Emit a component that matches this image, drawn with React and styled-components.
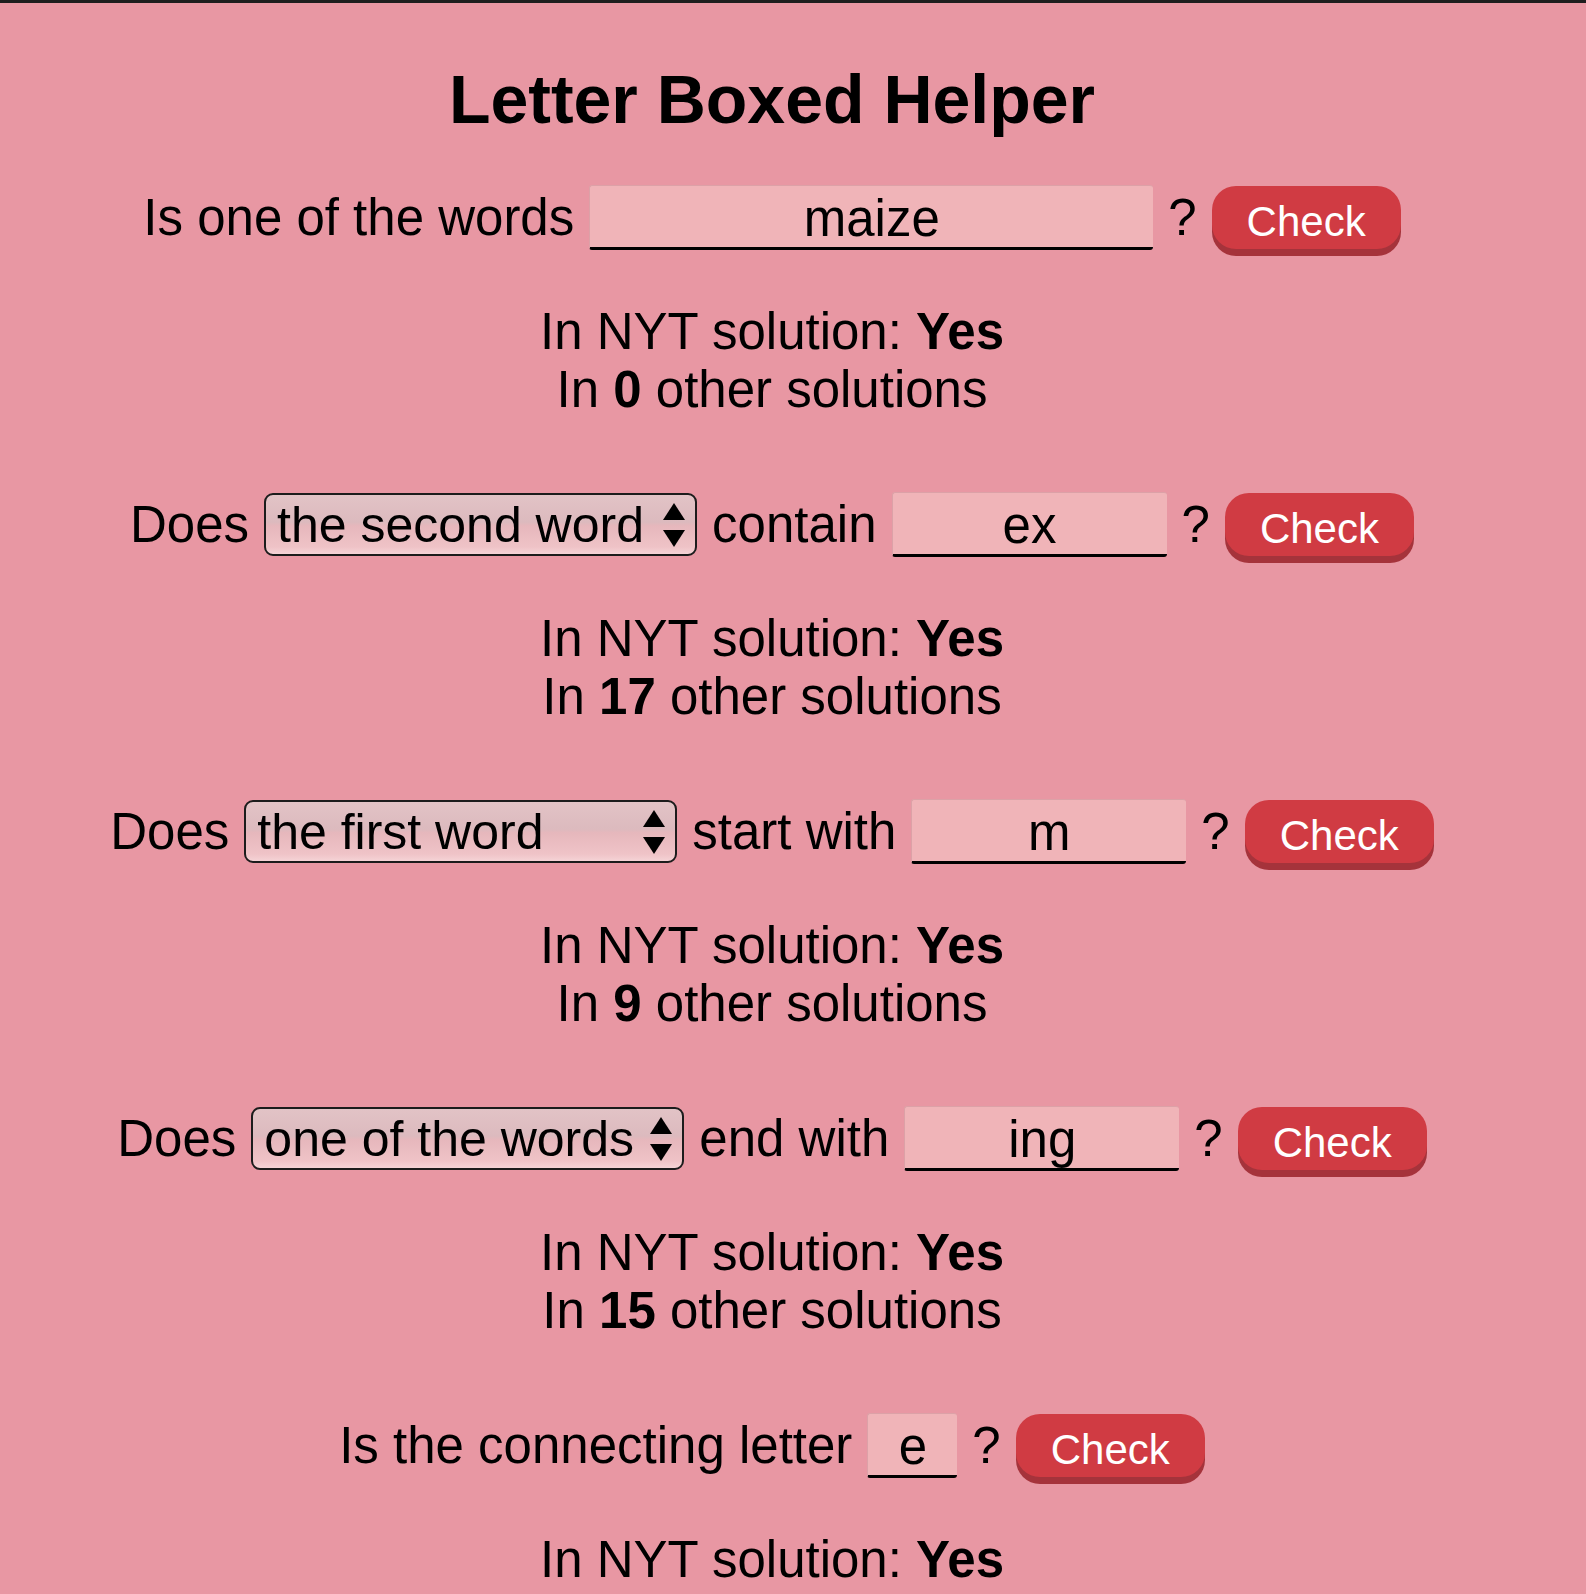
import React from "react";
import styled, { createGlobalStyle } from "styled-components";

const GlobalStyle = createGlobalStyle`
  html, body {
    margin: 0;
    padding: 0;
    background: #e897a3;
    overflow: hidden;
  }
  body {
    font-family: "Liberation Sans", Arial, Helvetica, sans-serif;
    color: #000;
  }
`;

const Page = styled.div`
  box-sizing: border-box;
  height: 1594px;
  overflow: hidden;
  border-top: 3px solid #1e1e1e;
  padding-right: 42px;
  background: #e897a3;
`;

const Title = styled.h1`
  margin: 57px 0 0;
  font-size: 68px;
  line-height: 78px;
  font-weight: bold;
  text-align: center;
`;

const Main = styled.main`
  margin-top: 47px;
  display: flex;
  flex-direction: column;
  align-items: center;
  gap: 74px;
`;

const Section = styled.section`
  display: flex;
  flex-direction: column;
  align-items: center;
  gap: 53px;
`;

const Row = styled.div`
  display: flex;
  align-items: center;
  justify-content: center;
  gap: 15px;
  height: 65px;
  font-size: 51px;
`;

const Label = styled.span`
  line-height: 57.5px;
  white-space: nowrap;
`;

const TextInput = styled.input`
  box-sizing: border-box;
  width: ${(p) => p.$w}px;
  height: 65px;
  margin: 0;
  padding: 3px 4px 0;
  border: none;
  border-top: 1px solid #dca1a7;
  border-left: 1px solid #dca1a7;
  border-bottom: 3px solid #000;
  border-radius: 3px;
  background: #f0b4b8;
  font-family: inherit;
  font-size: 51px;
  color: #000;
  text-align: center;
  outline: none;
`;

const SelectWrap = styled.div`
  position: relative;
  display: flex;
`;

const Select = styled.select`
  appearance: none;
  -webkit-appearance: none;
  box-sizing: border-box;
  width: 433px;
  height: 63px;
  margin: 0;
  padding: 0 34px 0 11px;
  border: 2px solid #1c1c1c;
  border-radius: 9px;
  background: linear-gradient(
    to bottom,
    #e2c3c6 0%,
    #dcbabe 46%,
    #e6b7bc 52%,
    #efc3c7 88%,
    #f5d3d6 100%
  );
  font-family: inherit;
  font-size: 50px;
  color: #000;
  outline: none;
`;

const Arrows = styled.svg`
  position: absolute;
  right: 12px;
  top: 50%;
  transform: translateY(-50%);
  pointer-events: none;
`;

const CheckButton = styled.button`
  box-sizing: border-box;
  height: 63px;
  margin: 0;
  padding: 8px 35px 0;
  border: none;
  border-radius: 24px;
  background: #d03b43;
  box-shadow: 0 7px 0 #a5333b;
  color: #fff;
  font-family: inherit;
  font-size: 42px;
  line-height: 1;
  cursor: pointer;
`;

const Results = styled.div`
  font-size: 51px;
  line-height: 57.5px;
  text-align: center;
`;

const Line = styled.div`
  white-space: nowrap;
`;

function Dropdown({ value, options }) {
  return (
    <SelectWrap>
      <Select defaultValue={value}>
        {options.map((o) => (
          <option key={o} value={o}>
            {o}
          </option>
        ))}
      </Select>
      <Arrows width="22" height="44" viewBox="0 0 22 44">
        <polygon points="11,0 22,17 0,17" fill="#000" />
        <polygon points="0,27 22,27 11,44" fill="#000" />
      </Arrows>
    </SelectWrap>
  );
}

const WHICH = ["one of the words", "the first word", "the second word", "the third word"];

function Outcome({ other, showOther = true }) {
  return (
    <Results>
      <Line>
        In NYT solution: <b>Yes</b>
      </Line>
      {showOther && (
        <Line>
          In <b>{other}</b> other solutions
        </Line>
      )}
    </Results>
  );
}

export default function App() {
  return (
    <>
      <GlobalStyle />
      <Page>
        <Title>Letter Boxed Helper</Title>
        <Main>
          <Section>
            <Row>
              <Label>Is one of the words</Label>
              <TextInput $w={564} defaultValue="maize" />
              <Label>?</Label>
              <CheckButton>Check</CheckButton>
            </Row>
            <Outcome other={0} />
          </Section>

          <Section>
            <Row>
              <Label>Does</Label>
              <Dropdown value="the second word" options={WHICH} />
              <Label>contain</Label>
              <TextInput $w={275} defaultValue="ex" />
              <Label>?</Label>
              <CheckButton>Check</CheckButton>
            </Row>
            <Outcome other={17} />
          </Section>

          <Section>
            <Row>
              <Label>Does</Label>
              <Dropdown value="the first word" options={WHICH} />
              <Label>start with</Label>
              <TextInput $w={275} defaultValue="m" />
              <Label>?</Label>
              <CheckButton>Check</CheckButton>
            </Row>
            <Outcome other={9} />
          </Section>

          <Section>
            <Row>
              <Label>Does</Label>
              <Dropdown value="one of the words" options={WHICH} />
              <Label>end with</Label>
              <TextInput $w={275} defaultValue="ing" />
              <Label>?</Label>
              <CheckButton>Check</CheckButton>
            </Row>
            <Outcome other={15} />
          </Section>

          <Section>
            <Row>
              <Label>Is the connecting letter</Label>
              <TextInput $w={90} defaultValue="e" />
              <Label>?</Label>
              <CheckButton>Check</CheckButton>
            </Row>
            <Outcome showOther={false} />
          </Section>
        </Main>
      </Page>
    </>
  );
}
